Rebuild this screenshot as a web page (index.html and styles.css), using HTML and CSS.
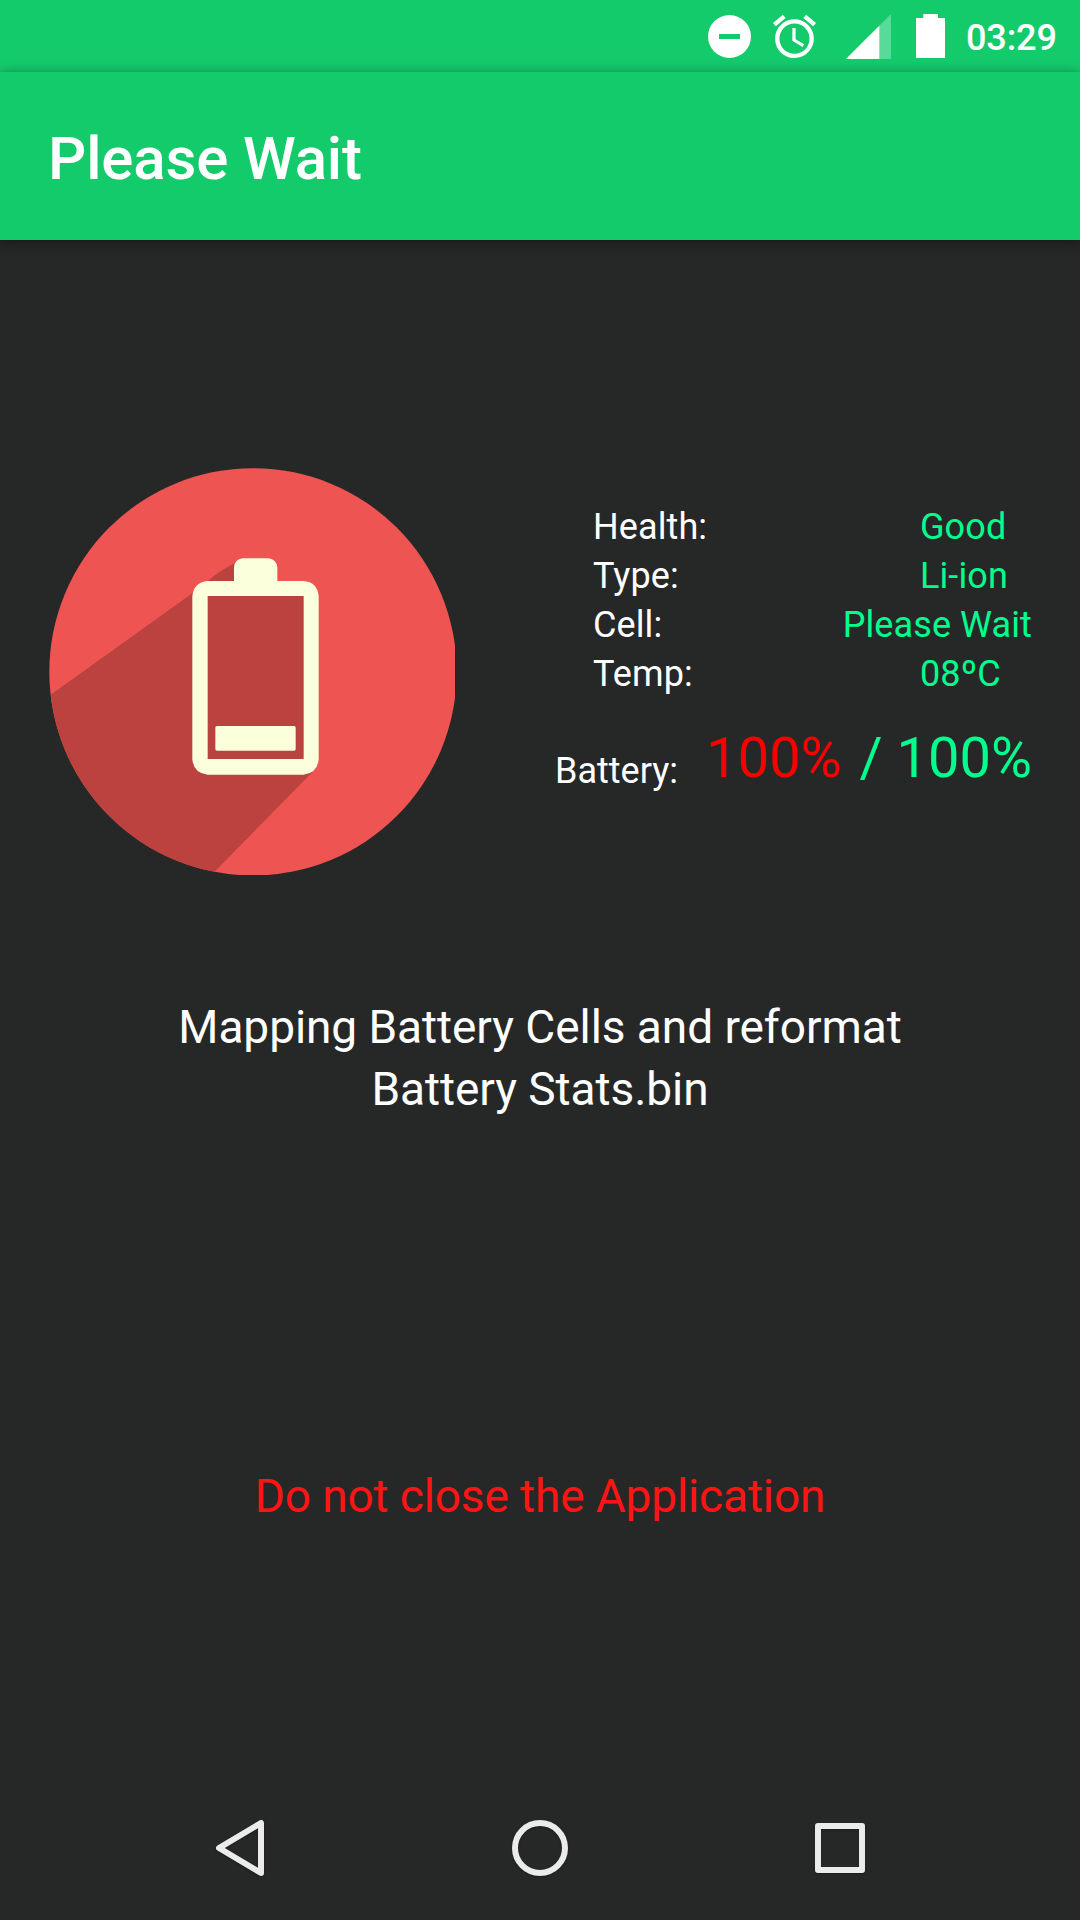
FILE: index.html
```html
<!DOCTYPE html>
<html lang="en">
<head>
  <meta charset="UTF-8" />
  <meta name="viewport" content="width=device-width, initial-scale=1.0"/>
  <title>Please Wait</title>
  <link rel="stylesheet" href="styles.css">
</head>
<body>
  <div class="status-bar">
    <svg class="icon-dnd" viewBox="0 0 43 43" width="43" height="43">
      <path fill="#fff" fill-rule="evenodd" d="M21.5 0a21.5 21.5 0 1 0 0 43a21.5 21.5 0 1 0 0-43zM11 19h21v5H11z"/>
    </svg>
    <svg class="icon-alarm" viewBox="2 2 20 20" width="43" height="43">
      <path fill="#fff" d="M22 5.72l-4.6-3.86-1.29 1.53 4.6 3.86L22 5.72zM7.88 3.39L6.6 1.86 2 5.71l1.29 1.53 4.59-3.85zM12.5 8H11v6l4.75 2.85.75-1.23-4-2.37V8zM12 4c-4.97 0-9 4.03-9 9s4.02 9 9 9a9 9 0 0 0 0-18zm0 16c-3.87 0-7-3.13-7-7s3.13-7 7-7 7 3.13 7 7-3.13 7-7 7z"/>
    </svg>
    <svg class="icon-signal" viewBox="0 0 45 45" width="45" height="45">
      <path fill="#fff" fill-opacity=".3" d="M0 45h45V0z"/>
      <path fill="#fff" d="M0 45h33.3V11.7z"/>
    </svg>
    <svg class="icon-battery" viewBox="0 0 29 44" width="29" height="44">
      <path fill="#fff" d="M7.3 0h14.6v4H29v40H0V4h7.3z"/>
    </svg>
    <span class="clock">03:29</span>
  </div>

  <header>
    <h1>Please Wait</h1>
  </header>

  <main>
    <section class="battery-info">
      <svg class="battery-logo" viewBox="27 54 1218 1221" width="406" height="407">
        <clipPath id="disc"><circle cx="639" cy="665.5" r="611"/></clipPath>
        <circle cx="639" cy="665.5" r="611" fill="#ee5451"/>
        <!-- long shadow -->
        <path clip-path="url(#disc)" fill="#bc423f" d="M590 337Q545 358 507 390L457 430L0 757V1300H489L521 1268L815 968V400H590z"/>
        <path fill="#fbffdb" fill-rule="evenodd" d="M582 393V352Q584 328 608 325H686Q709 328 712 352V393H790Q832 395 836 439V928Q832 970 790 974H503Q461 970 457 928V439Q461 397 503 393zM503 438V927H791V438z"/>
        <rect x="526" y="828" width="241" height="74" rx="5" fill="#fbffdb"/>
      </svg>

      <div class="stats">
        <div class="row"><span>Health:</span><span class="value">Good</span></div>
        <div class="row"><span>Type:</span><span class="value">Li-ion</span></div>
        <div class="row"><span>Cell:</span><span class="value">Please Wait</span></div>
        <div class="row"><span>Temp:</span><span class="value">08ºC</span></div>
        <div class="level">
          <span class="level-label">Battery:</span>
          <span class="level-value"><span class="current">100%</span> / 100%</span>
        </div>
      </div>
    </section>

    <p class="message">Mapping Battery Cells and reformat<br>Battery Stats.bin</p>
    <p class="warning">Do not close the Application</p>
  </main>

  <nav class="nav-bar">
    <svg viewBox="0 0 60 60" width="60" height="60">
      <path d="M51 5V55L9 30z"/>
    </svg>
    <svg viewBox="0 0 60 60" width="60" height="60">
      <circle cx="30" cy="30" r="25"/>
    </svg>
    <svg viewBox="0 0 60 60" width="60" height="60">
      <rect x="8" y="8" width="44" height="44"/>
    </svg>
  </nav>
</body>
</html>
```
FILE: styles.css
```css
* {
  box-sizing: border-box;
}

body {
  margin: 0;
  width: 1080px;
  height: 1920px;
  overflow: hidden;
  display: flex;
  flex-direction: column;
  font-family: Roboto, sans-serif;
  background-color: #262828;
  color: #fff;
}

.status-bar {
  height: 72px;
  padding: 14px 24px 0 0;
  display: flex;
  justify-content: flex-end;
  align-items: flex-start;
  background-color: #14cb6c;
}

.icon-dnd {
  margin: 1px 22px 0 0;
}

.icon-alarm {
  margin: 1px 30px 0 0;
  overflow: visible;
}

.icon-signal {
  margin-right: 25px;
}

.icon-battery {
  margin-right: 21px;
}

.clock {
  width: 90px;
  font-size: 36px;
  font-weight: 500;
  line-height: 48px;
  letter-spacing: -0.1px;
}

header {
  height: 168px;
  padding: 4px 48px 0;
  display: flex;
  align-items: center;
  background-color: #14cb6c;
  box-shadow: 0 2px 12px rgba(0, 0, 0, 0.45);
}

h1 {
  margin: 0;
  font-size: 60px;
  font-weight: 500;
  letter-spacing: -0.15px;
}

main {
  flex: 1;
  padding-top: 228px;
}

.battery-info {
  display: flex;
  height: 407px;
  padding: 0 48px 0 49px;
}

.stats {
  flex: 1;
  margin-left: 100px;
  padding-top: 35px;
  font-size: 36px;
}

.row {
  display: flex;
  justify-content: space-between;
  padding-left: 38px;
  line-height: 49px;
  letter-spacing: 0.1px;
}

.value {
  min-width: 112px;
  color: #00ff8d;
}

.level {
  display: flex;
  justify-content: space-between;
  padding-top: 23px;
}

.level-label {
  padding-top: 25px;
  line-height: 49px;
}

.level-value {
  font-size: 56px;
  line-height: 72px;
  color: #00ff8d;
}

.current {
  margin-right: 4px;
  color: #f80000;
}

.message,
.warning {
  margin: 0;
  font-size: 46px;
  line-height: 62px;
  text-align: center;
}

.message {
  margin-top: 121px;
  letter-spacing: -0.06px;
}

.warning {
  margin-top: 345px;
  letter-spacing: -0.13px;
  color: #ff1414;
}

.nav-bar {
  height: 144px;
  padding: 0 90px;
  display: flex;
  justify-content: space-around;
  align-items: center;
}

.nav-bar svg {
  fill: none;
  stroke: #ebebeb;
  stroke-width: 6px;
  stroke-linejoin: round;
  filter: drop-shadow(0 1px 1px rgba(0, 0, 0, 0.3));
}
```
